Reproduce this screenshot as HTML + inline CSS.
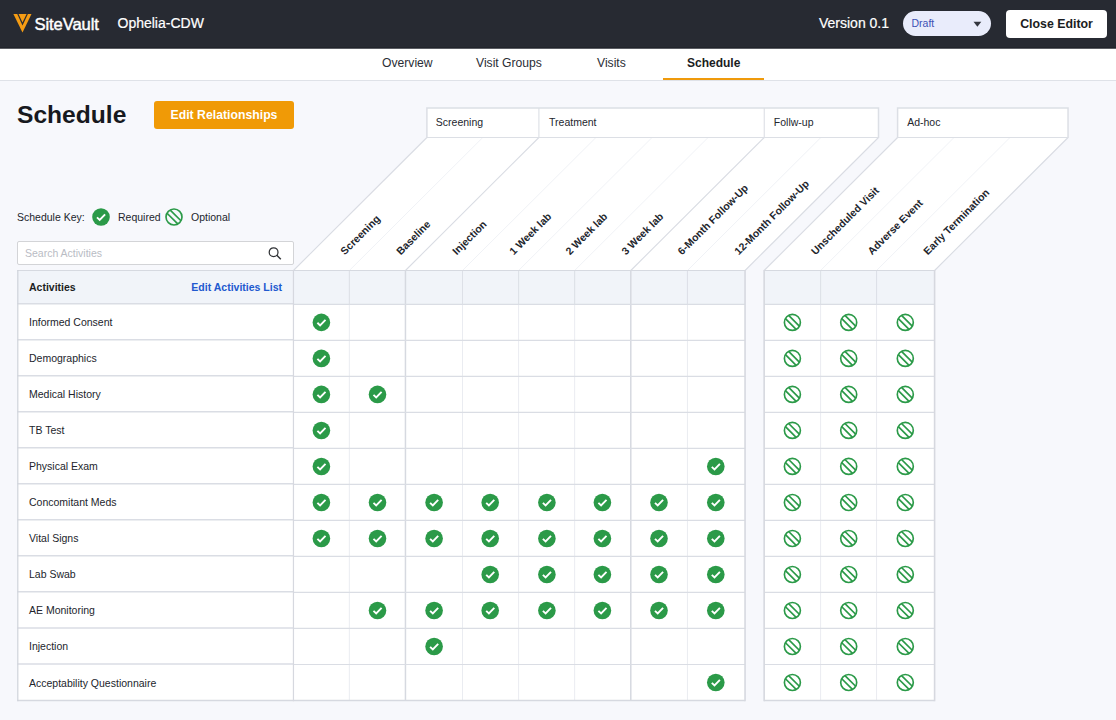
<!DOCTYPE html>
<html lang="en"><head><meta charset="utf-8"><title>Schedule</title>
<style>
*{box-sizing:border-box;margin:0;padding:0}
html,body{width:1116px;height:720px;overflow:hidden}
body{background:#f7f8fc;font-family:"Liberation Sans",Arial,sans-serif;color:#22252c;position:relative}
.abs{position:absolute;white-space:nowrap}
#top{position:absolute;left:0;top:0;width:1116px;height:48px;background:#272a32;border-bottom:1px solid #21242b}
#topsh{position:absolute;left:0;top:48px;width:1116px;height:1px;background:#5b5d63;z-index:2}
#nav{position:absolute;left:0;top:48px;width:1116px;height:33px;background:#fff;border-bottom:1px solid #dfe2e8}
.tab{position:absolute;top:0;height:32px;line-height:30px;font-size:12.15px;color:#2a2d35;white-space:nowrap}
.tab.on{font-weight:bold;color:#1b1d22;font-size:12px}
#ul{position:absolute;left:663px;top:30px;width:101px;height:2px;background:#ef9a0c}
#pill{position:absolute;left:903px;top:11px;width:88px;height:25px;border-radius:13px;background:#e9ecfb;color:#3c51b5;font-size:10.5px;line-height:25px;padding-left:8.5px}
#pill svg{position:absolute;left:0;top:0}
#close{position:absolute;left:1006px;top:10px;width:101px;height:28px;border-radius:4px;background:#fff;color:#1b1d22;font-weight:bold;font-size:12.35px;line-height:28px;text-align:center}
#h1{left:17px;top:98px;font-size:24.6px;font-weight:bold;color:#17191e;line-height:34px}
#editrel{position:absolute;left:154px;top:101px;width:140px;height:28px;border-radius:3px;background:#f09a06;color:#fff;font-weight:bold;font-size:12.25px;line-height:27px;text-align:center}
.sm{font-size:10.5px;line-height:14px}
#search{position:absolute;left:17px;top:241px;width:277px;height:24px;background:#fff;border:1px solid #d3d4d7;border-radius:2px;font-size:10.5px;color:#b9bcc4;line-height:22px;padding-left:7px}
svg text{font-family:"Liberation Sans",Arial,sans-serif}
</style></head><body>
<div id="top">
<svg class="abs" style="left:13px;top:13px" width="20" height="21" viewBox="0 0 20 21"><path d="M0.4,1 L18.5,1 L9.5,19.6 Z" fill="#f59c14"/><path d="M4.25,0.9 L14.9,0.9 L9.5,12.4 Z" fill="#272a32"/><path d="M5.5,1 L13.6,1 L9.5,9.4 Z" fill="#f59c14"/></svg>
<div class="abs" style="left:34.6px;top:13px;transform:translateY(1.7px);font-size:16.6px;line-height:20px;color:#fff;letter-spacing:-0.12px;-webkit-text-stroke:0.45px #fff">SiteVault</div>
<div class="abs" style="left:117.5px;top:14px;font-size:14px;line-height:18px;color:#fff;-webkit-text-stroke:0.2px #fff">Ophelia-CDW</div>
<div class="abs" style="left:819px;top:14px;font-size:14px;line-height:18px;color:#fff;-webkit-text-stroke:0.2px #fff">Version 0.1</div>
<div id="pill">Draft<svg width="88" height="25" viewBox="0 0 88 25"><polygon points="70.5,10.8 78.3,10.8 74.4,15.7" fill="#34373f"/></svg></div>
<div id="close">Close Editor</div>
</div>
<div id="topsh"></div>
<div id="nav">
<div class="tab" style="left:382px">Overview</div>
<div class="tab" style="left:476px">Visit Groups</div>
<div class="tab" style="left:597px">Visits</div>
<div class="tab on" style="left:687px">Schedule</div>
<div id="ul"></div>
</div>
<div class="abs" id="h1">Schedule</div>
<div id="editrel"><span style="display:inline-block;transform:translateY(0.7px)">Edit Relationships</span></div>
<div class="abs sm" style="left:17px;top:210px">Schedule Key:</div>
<div class="abs sm" style="left:118px;top:210px">Required</div>
<div class="abs sm" style="left:191px;top:210px">Optional</div>
<div id="search">Search Activities
<svg class="abs" style="right:11px;top:4px" width="14" height="15" viewBox="0 0 14 15"><circle cx="5.6" cy="6.15" r="4.4" fill="none" stroke="#303236" stroke-width="1.25"/><path d="M8.8,9.35 L12.8,13.35" stroke="#303236" stroke-width="1.45"/></svg>
</div>
<svg class="abs" style="left:0;top:0" width="1116" height="720" viewBox="0 0 1116 720">
<g transform="translate(101.00,217.00)"><circle r="8.8" fill="#2b9a48"/><path d="M-4.0,0.4 L-1.3,3.0 L4.1,-2.6" fill="none" stroke="#fff" stroke-width="1.9"/></g>
<g transform="translate(174.00,217.00)"><circle r="8.0" fill="none" stroke="#2b9a48" stroke-width="1.65"/><path d="M-6.95,-3.75 L3.75,6.95 M-3.75,-6.95 L6.95,3.75" stroke="#2b9a48" stroke-width="1.7" fill="none"/></g>
<polygon points="293.45,270.5 426.9,137.5 878.5,137.5 745.05,270.5" fill="#fff"/>
<polygon points="764.15,270.5 897.5999999999999,137.5 1068.05,137.5 934.6,270.5" fill="#fff"/>
<line x1="293.45" y1="270.5" x2="426.90" y2="137.5" stroke="#d9dce3" stroke-width="1.1"/>
<line x1="349.35" y1="270.5" x2="482.80" y2="137.5" stroke="#f0f2f6" stroke-width="1"/>
<line x1="405.45" y1="270.5" x2="538.90" y2="137.5" stroke="#d9dce3" stroke-width="1.1"/>
<line x1="462.50" y1="270.5" x2="595.95" y2="137.5" stroke="#f0f2f6" stroke-width="1"/>
<line x1="518.60" y1="270.5" x2="652.05" y2="137.5" stroke="#f0f2f6" stroke-width="1"/>
<line x1="574.65" y1="270.5" x2="708.10" y2="137.5" stroke="#f0f2f6" stroke-width="1"/>
<line x1="630.80" y1="270.5" x2="764.25" y2="137.5" stroke="#d9dce3" stroke-width="1.1"/>
<line x1="687.45" y1="270.5" x2="820.90" y2="137.5" stroke="#f0f2f6" stroke-width="1"/>
<line x1="745.05" y1="270.5" x2="878.50" y2="137.5" stroke="#d9dce3" stroke-width="1.1"/>
<line x1="764.15" y1="270.5" x2="897.60" y2="137.5" stroke="#d9dce3" stroke-width="1.1"/>
<line x1="820.60" y1="270.5" x2="954.05" y2="137.5" stroke="#f0f2f6" stroke-width="1"/>
<line x1="876.55" y1="270.5" x2="1010.00" y2="137.5" stroke="#f0f2f6" stroke-width="1"/>
<line x1="934.60" y1="270.5" x2="1068.05" y2="137.5" stroke="#d9dce3" stroke-width="1.1"/>
<rect x="426.90" y="108.0" width="451.60" height="29.5" fill="#fff"/>
<path d="M426.90,138.0 L426.90,108.0 L878.50,108.0 L878.50,138.0" fill="none" stroke="#dcdfe5" stroke-width="1.5" stroke-linejoin="miter"/>
<line x1="426.90" y1="137.5" x2="878.50" y2="137.5" stroke="#dcdfe5" stroke-width="1.1"/>
<line x1="538.90" y1="108.0" x2="538.90" y2="137.5" stroke="#dcdfe5" stroke-width="1.1"/>
<line x1="764.25" y1="108.0" x2="764.25" y2="137.5" stroke="#dcdfe5" stroke-width="1.1"/>
<text x="435.80" y="126.0" font-size="10.5" fill="#23262e">Screening</text>
<text x="549.05" y="126.0" font-size="10.5" fill="#23262e">Treatment</text>
<text x="773.85" y="126.0" font-size="10.5" fill="#23262e">Follw-up</text>
<rect x="897.60" y="108.0" width="170.45" height="29.5" fill="#fff"/>
<path d="M897.60,138.0 L897.60,108.0 L1068.05,108.0 L1068.05,138.0" fill="none" stroke="#dcdfe5" stroke-width="1.5" stroke-linejoin="miter"/>
<line x1="897.60" y1="137.5" x2="1068.05" y2="137.5" stroke="#dcdfe5" stroke-width="1.1"/>
<text x="907.20" y="126.0" font-size="10.5" fill="#23262e">Ad-hoc</text>
<text transform="translate(344.8,255.4) rotate(-45)" font-size="10.5" font-weight="bold" fill="#22252c">Screening</text>
<text transform="translate(400.7,255.4) rotate(-45)" font-size="10.5" font-weight="bold" fill="#22252c">Baseline</text>
<text transform="translate(456.8,255.4) rotate(-45)" font-size="10.5" font-weight="bold" fill="#22252c">Injection</text>
<text transform="translate(513.8,255.4) rotate(-45)" font-size="10.5" font-weight="bold" fill="#22252c">1 Week lab</text>
<text transform="translate(569.9,255.4) rotate(-45)" font-size="10.5" font-weight="bold" fill="#22252c">2 Week lab</text>
<text transform="translate(625.9,255.4) rotate(-45)" font-size="10.5" font-weight="bold" fill="#22252c">3 Week lab</text>
<text transform="translate(682.1,255.4) rotate(-45)" font-size="10.5" font-weight="bold" fill="#22252c">6-Month Follow-Up</text>
<text transform="translate(738.8,255.4) rotate(-45)" font-size="10.5" font-weight="bold" fill="#22252c">12-Month Follow-Up</text>
<text transform="translate(815.4,255.4) rotate(-45)" font-size="10.5" font-weight="bold" fill="#22252c">Unscheduled Visit</text>
<text transform="translate(871.9,255.4) rotate(-45)" font-size="10.5" font-weight="bold" fill="#22252c">Adverse Event</text>
<text transform="translate(927.8,255.4) rotate(-45)" font-size="10.5" font-weight="bold" fill="#22252c">Early Termination</text>
<rect x="17.5" y="270.0" width="275.95" height="430.60" fill="#fff"/>
<rect x="17.5" y="270.0" width="275.95" height="33.70" fill="#f1f4f9"/>
<line x1="17.5" y1="303.70" x2="293.45" y2="303.70" stroke="#dadde4" stroke-width="1.5"/>
<line x1="17.5" y1="339.72" x2="293.45" y2="339.72" stroke="#dadde4" stroke-width="1.5"/>
<line x1="17.5" y1="375.74" x2="293.45" y2="375.74" stroke="#dadde4" stroke-width="1.5"/>
<line x1="17.5" y1="411.76" x2="293.45" y2="411.76" stroke="#dadde4" stroke-width="1.5"/>
<line x1="17.5" y1="447.78" x2="293.45" y2="447.78" stroke="#dadde4" stroke-width="1.5"/>
<line x1="17.5" y1="483.80" x2="293.45" y2="483.80" stroke="#dadde4" stroke-width="1.5"/>
<line x1="17.5" y1="519.82" x2="293.45" y2="519.82" stroke="#dadde4" stroke-width="1.5"/>
<line x1="17.5" y1="555.84" x2="293.45" y2="555.84" stroke="#dadde4" stroke-width="1.5"/>
<line x1="17.5" y1="591.86" x2="293.45" y2="591.86" stroke="#dadde4" stroke-width="1.5"/>
<line x1="17.5" y1="627.88" x2="293.45" y2="627.88" stroke="#dadde4" stroke-width="1.5"/>
<line x1="17.5" y1="663.90" x2="293.45" y2="663.90" stroke="#dadde4" stroke-width="1.5"/>
<line x1="17.5" y1="700.6" x2="293.45" y2="700.6" stroke="#d6d9e0" stroke-width="1.5"/>
<line x1="17.5" y1="270.5" x2="293.45" y2="270.5" stroke="#d6d9e0" stroke-width="1.2"/>
<line x1="17.8" y1="270.0" x2="17.8" y2="701.35" stroke="#cfd2da" stroke-width="1.2"/>
<text x="29" y="291.0" font-size="10.5" font-weight="bold" fill="#1b1d22">Activities</text>
<text x="282" y="291.0" font-size="10.5" font-weight="bold" fill="#2159cf" text-anchor="end">Edit Activities List</text>
<text x="29" y="325.80" font-size="10.5" fill="#22252c">Informed Consent</text>
<text x="29" y="361.82" font-size="10.5" fill="#22252c">Demographics</text>
<text x="29" y="397.84" font-size="10.5" fill="#22252c">Medical History</text>
<text x="29" y="433.86" font-size="10.5" fill="#22252c">TB Test</text>
<text x="29" y="469.88" font-size="10.5" fill="#22252c">Physical Exam</text>
<text x="29" y="505.90" font-size="10.5" fill="#22252c">Concomitant Meds</text>
<text x="29" y="541.92" font-size="10.5" fill="#22252c">Vital Signs</text>
<text x="29" y="577.94" font-size="10.5" fill="#22252c">Lab Swab</text>
<text x="29" y="613.96" font-size="10.5" fill="#22252c">AE Monitoring</text>
<text x="29" y="649.98" font-size="10.5" fill="#22252c">Injection</text>
<text x="29" y="686.70" font-size="10.5" fill="#22252c">Acceptability Questionnaire</text>
<rect x="293.45" y="270.0" width="451.60" height="430.60" fill="#fff"/>
<rect x="293.45" y="270.0" width="451.60" height="34.35" fill="#f1f4f9"/>
<line x1="349.35" y1="270.0" x2="349.35" y2="700.60" stroke="#eaecf1" stroke-width="1"/>
<line x1="349.35" y1="270.0" x2="349.35" y2="304.35" stroke="#dde0e7" stroke-width="1"/>
<line x1="405.45" y1="270.0" x2="405.45" y2="700.60" stroke="#d6d9e0" stroke-width="1.5"/>
<line x1="462.50" y1="270.0" x2="462.50" y2="700.60" stroke="#eaecf1" stroke-width="1"/>
<line x1="462.50" y1="270.0" x2="462.50" y2="304.35" stroke="#dde0e7" stroke-width="1"/>
<line x1="518.60" y1="270.0" x2="518.60" y2="700.60" stroke="#eaecf1" stroke-width="1"/>
<line x1="518.60" y1="270.0" x2="518.60" y2="304.35" stroke="#dde0e7" stroke-width="1"/>
<line x1="574.65" y1="270.0" x2="574.65" y2="700.60" stroke="#eaecf1" stroke-width="1"/>
<line x1="574.65" y1="270.0" x2="574.65" y2="304.35" stroke="#dde0e7" stroke-width="1"/>
<line x1="630.80" y1="270.0" x2="630.80" y2="700.60" stroke="#d6d9e0" stroke-width="1.5"/>
<line x1="687.45" y1="270.0" x2="687.45" y2="700.60" stroke="#eaecf1" stroke-width="1"/>
<line x1="687.45" y1="270.0" x2="687.45" y2="304.35" stroke="#dde0e7" stroke-width="1"/>
<line x1="293.45" y1="304.35" x2="745.05" y2="304.35" stroke="#dadde4" stroke-width="1.15"/>
<line x1="293.45" y1="340.36" x2="745.05" y2="340.36" stroke="#dadde4" stroke-width="1.15"/>
<line x1="293.45" y1="376.37" x2="745.05" y2="376.37" stroke="#dadde4" stroke-width="1.15"/>
<line x1="293.45" y1="412.38" x2="745.05" y2="412.38" stroke="#dadde4" stroke-width="1.15"/>
<line x1="293.45" y1="448.39" x2="745.05" y2="448.39" stroke="#dadde4" stroke-width="1.15"/>
<line x1="293.45" y1="484.40" x2="745.05" y2="484.40" stroke="#dadde4" stroke-width="1.15"/>
<line x1="293.45" y1="520.41" x2="745.05" y2="520.41" stroke="#dadde4" stroke-width="1.15"/>
<line x1="293.45" y1="556.42" x2="745.05" y2="556.42" stroke="#dadde4" stroke-width="1.15"/>
<line x1="293.45" y1="592.43" x2="745.05" y2="592.43" stroke="#dadde4" stroke-width="1.15"/>
<line x1="293.45" y1="628.44" x2="745.05" y2="628.44" stroke="#dadde4" stroke-width="1.15"/>
<line x1="293.45" y1="664.45" x2="745.05" y2="664.45" stroke="#dadde4" stroke-width="1.15"/>
<line x1="293.45" y1="700.6" x2="745.05" y2="700.6" stroke="#d6d9e0" stroke-width="1.5"/>
<line x1="293.45" y1="270.5" x2="745.05" y2="270.5" stroke="#d6d9e0" stroke-width="1.2"/>
<line x1="293.45" y1="270.0" x2="293.45" y2="701.35" stroke="#d6d8df" stroke-width="1.2"/>
<line x1="745.05" y1="270.0" x2="745.05" y2="701.35" stroke="#d6d8df" stroke-width="1.6"/>
<rect x="764.15" y="270.0" width="170.45" height="430.60" fill="#fff"/>
<rect x="764.15" y="270.0" width="170.45" height="34.35" fill="#f1f4f9"/>
<line x1="820.60" y1="270.0" x2="820.60" y2="700.60" stroke="#eaecf1" stroke-width="1"/>
<line x1="820.60" y1="270.0" x2="820.60" y2="304.35" stroke="#dde0e7" stroke-width="1"/>
<line x1="876.55" y1="270.0" x2="876.55" y2="700.60" stroke="#eaecf1" stroke-width="1"/>
<line x1="876.55" y1="270.0" x2="876.55" y2="304.35" stroke="#dde0e7" stroke-width="1"/>
<line x1="764.15" y1="304.35" x2="934.60" y2="304.35" stroke="#dadde4" stroke-width="1.15"/>
<line x1="764.15" y1="340.36" x2="934.60" y2="340.36" stroke="#dadde4" stroke-width="1.15"/>
<line x1="764.15" y1="376.37" x2="934.60" y2="376.37" stroke="#dadde4" stroke-width="1.15"/>
<line x1="764.15" y1="412.38" x2="934.60" y2="412.38" stroke="#dadde4" stroke-width="1.15"/>
<line x1="764.15" y1="448.39" x2="934.60" y2="448.39" stroke="#dadde4" stroke-width="1.15"/>
<line x1="764.15" y1="484.40" x2="934.60" y2="484.40" stroke="#dadde4" stroke-width="1.15"/>
<line x1="764.15" y1="520.41" x2="934.60" y2="520.41" stroke="#dadde4" stroke-width="1.15"/>
<line x1="764.15" y1="556.42" x2="934.60" y2="556.42" stroke="#dadde4" stroke-width="1.15"/>
<line x1="764.15" y1="592.43" x2="934.60" y2="592.43" stroke="#dadde4" stroke-width="1.15"/>
<line x1="764.15" y1="628.44" x2="934.60" y2="628.44" stroke="#dadde4" stroke-width="1.15"/>
<line x1="764.15" y1="664.45" x2="934.60" y2="664.45" stroke="#dadde4" stroke-width="1.15"/>
<line x1="764.15" y1="700.6" x2="934.60" y2="700.6" stroke="#d6d9e0" stroke-width="1.5"/>
<line x1="764.15" y1="270.5" x2="934.60" y2="270.5" stroke="#d6d9e0" stroke-width="1.2"/>
<line x1="764.15" y1="270.0" x2="764.15" y2="701.35" stroke="#d6d8df" stroke-width="1.6"/>
<line x1="934.60" y1="270.0" x2="934.60" y2="701.35" stroke="#d6d8df" stroke-width="1.6"/>
<g transform="translate(321.40,322.40)"><circle r="8.8" fill="#2b9a48"/><path d="M-4.0,0.4 L-1.3,3.0 L4.1,-2.6" fill="none" stroke="#fff" stroke-width="1.9"/></g>
<g transform="translate(792.40,322.40)"><circle r="8.0" fill="none" stroke="#2b9a48" stroke-width="1.65"/><path d="M-6.95,-3.75 L3.75,6.95 M-3.75,-6.95 L6.95,3.75" stroke="#2b9a48" stroke-width="1.7" fill="none"/></g>
<g transform="translate(848.70,322.40)"><circle r="8.0" fill="none" stroke="#2b9a48" stroke-width="1.65"/><path d="M-6.95,-3.75 L3.75,6.95 M-3.75,-6.95 L6.95,3.75" stroke="#2b9a48" stroke-width="1.7" fill="none"/></g>
<g transform="translate(905.30,322.40)"><circle r="8.0" fill="none" stroke="#2b9a48" stroke-width="1.65"/><path d="M-6.95,-3.75 L3.75,6.95 M-3.75,-6.95 L6.95,3.75" stroke="#2b9a48" stroke-width="1.7" fill="none"/></g>
<g transform="translate(321.40,358.41)"><circle r="8.8" fill="#2b9a48"/><path d="M-4.0,0.4 L-1.3,3.0 L4.1,-2.6" fill="none" stroke="#fff" stroke-width="1.9"/></g>
<g transform="translate(792.40,358.41)"><circle r="8.0" fill="none" stroke="#2b9a48" stroke-width="1.65"/><path d="M-6.95,-3.75 L3.75,6.95 M-3.75,-6.95 L6.95,3.75" stroke="#2b9a48" stroke-width="1.7" fill="none"/></g>
<g transform="translate(848.70,358.41)"><circle r="8.0" fill="none" stroke="#2b9a48" stroke-width="1.65"/><path d="M-6.95,-3.75 L3.75,6.95 M-3.75,-6.95 L6.95,3.75" stroke="#2b9a48" stroke-width="1.7" fill="none"/></g>
<g transform="translate(905.30,358.41)"><circle r="8.0" fill="none" stroke="#2b9a48" stroke-width="1.65"/><path d="M-6.95,-3.75 L3.75,6.95 M-3.75,-6.95 L6.95,3.75" stroke="#2b9a48" stroke-width="1.7" fill="none"/></g>
<g transform="translate(321.40,394.42)"><circle r="8.8" fill="#2b9a48"/><path d="M-4.0,0.4 L-1.3,3.0 L4.1,-2.6" fill="none" stroke="#fff" stroke-width="1.9"/></g>
<g transform="translate(377.50,394.42)"><circle r="8.8" fill="#2b9a48"/><path d="M-4.0,0.4 L-1.3,3.0 L4.1,-2.6" fill="none" stroke="#fff" stroke-width="1.9"/></g>
<g transform="translate(792.40,394.42)"><circle r="8.0" fill="none" stroke="#2b9a48" stroke-width="1.65"/><path d="M-6.95,-3.75 L3.75,6.95 M-3.75,-6.95 L6.95,3.75" stroke="#2b9a48" stroke-width="1.7" fill="none"/></g>
<g transform="translate(848.70,394.42)"><circle r="8.0" fill="none" stroke="#2b9a48" stroke-width="1.65"/><path d="M-6.95,-3.75 L3.75,6.95 M-3.75,-6.95 L6.95,3.75" stroke="#2b9a48" stroke-width="1.7" fill="none"/></g>
<g transform="translate(905.30,394.42)"><circle r="8.0" fill="none" stroke="#2b9a48" stroke-width="1.65"/><path d="M-6.95,-3.75 L3.75,6.95 M-3.75,-6.95 L6.95,3.75" stroke="#2b9a48" stroke-width="1.7" fill="none"/></g>
<g transform="translate(321.40,430.43)"><circle r="8.8" fill="#2b9a48"/><path d="M-4.0,0.4 L-1.3,3.0 L4.1,-2.6" fill="none" stroke="#fff" stroke-width="1.9"/></g>
<g transform="translate(792.40,430.43)"><circle r="8.0" fill="none" stroke="#2b9a48" stroke-width="1.65"/><path d="M-6.95,-3.75 L3.75,6.95 M-3.75,-6.95 L6.95,3.75" stroke="#2b9a48" stroke-width="1.7" fill="none"/></g>
<g transform="translate(848.70,430.43)"><circle r="8.0" fill="none" stroke="#2b9a48" stroke-width="1.65"/><path d="M-6.95,-3.75 L3.75,6.95 M-3.75,-6.95 L6.95,3.75" stroke="#2b9a48" stroke-width="1.7" fill="none"/></g>
<g transform="translate(905.30,430.43)"><circle r="8.0" fill="none" stroke="#2b9a48" stroke-width="1.65"/><path d="M-6.95,-3.75 L3.75,6.95 M-3.75,-6.95 L6.95,3.75" stroke="#2b9a48" stroke-width="1.7" fill="none"/></g>
<g transform="translate(321.40,466.44)"><circle r="8.8" fill="#2b9a48"/><path d="M-4.0,0.4 L-1.3,3.0 L4.1,-2.6" fill="none" stroke="#fff" stroke-width="1.9"/></g>
<g transform="translate(715.80,466.44)"><circle r="8.8" fill="#2b9a48"/><path d="M-4.0,0.4 L-1.3,3.0 L4.1,-2.6" fill="none" stroke="#fff" stroke-width="1.9"/></g>
<g transform="translate(792.40,466.44)"><circle r="8.0" fill="none" stroke="#2b9a48" stroke-width="1.65"/><path d="M-6.95,-3.75 L3.75,6.95 M-3.75,-6.95 L6.95,3.75" stroke="#2b9a48" stroke-width="1.7" fill="none"/></g>
<g transform="translate(848.70,466.44)"><circle r="8.0" fill="none" stroke="#2b9a48" stroke-width="1.65"/><path d="M-6.95,-3.75 L3.75,6.95 M-3.75,-6.95 L6.95,3.75" stroke="#2b9a48" stroke-width="1.7" fill="none"/></g>
<g transform="translate(905.30,466.44)"><circle r="8.0" fill="none" stroke="#2b9a48" stroke-width="1.65"/><path d="M-6.95,-3.75 L3.75,6.95 M-3.75,-6.95 L6.95,3.75" stroke="#2b9a48" stroke-width="1.7" fill="none"/></g>
<g transform="translate(321.40,502.45)"><circle r="8.8" fill="#2b9a48"/><path d="M-4.0,0.4 L-1.3,3.0 L4.1,-2.6" fill="none" stroke="#fff" stroke-width="1.9"/></g>
<g transform="translate(377.50,502.45)"><circle r="8.8" fill="#2b9a48"/><path d="M-4.0,0.4 L-1.3,3.0 L4.1,-2.6" fill="none" stroke="#fff" stroke-width="1.9"/></g>
<g transform="translate(434.10,502.45)"><circle r="8.8" fill="#2b9a48"/><path d="M-4.0,0.4 L-1.3,3.0 L4.1,-2.6" fill="none" stroke="#fff" stroke-width="1.9"/></g>
<g transform="translate(490.20,502.45)"><circle r="8.8" fill="#2b9a48"/><path d="M-4.0,0.4 L-1.3,3.0 L4.1,-2.6" fill="none" stroke="#fff" stroke-width="1.9"/></g>
<g transform="translate(546.90,502.45)"><circle r="8.8" fill="#2b9a48"/><path d="M-4.0,0.4 L-1.3,3.0 L4.1,-2.6" fill="none" stroke="#fff" stroke-width="1.9"/></g>
<g transform="translate(602.40,502.45)"><circle r="8.8" fill="#2b9a48"/><path d="M-4.0,0.4 L-1.3,3.0 L4.1,-2.6" fill="none" stroke="#fff" stroke-width="1.9"/></g>
<g transform="translate(659.00,502.45)"><circle r="8.8" fill="#2b9a48"/><path d="M-4.0,0.4 L-1.3,3.0 L4.1,-2.6" fill="none" stroke="#fff" stroke-width="1.9"/></g>
<g transform="translate(715.80,502.45)"><circle r="8.8" fill="#2b9a48"/><path d="M-4.0,0.4 L-1.3,3.0 L4.1,-2.6" fill="none" stroke="#fff" stroke-width="1.9"/></g>
<g transform="translate(792.40,502.45)"><circle r="8.0" fill="none" stroke="#2b9a48" stroke-width="1.65"/><path d="M-6.95,-3.75 L3.75,6.95 M-3.75,-6.95 L6.95,3.75" stroke="#2b9a48" stroke-width="1.7" fill="none"/></g>
<g transform="translate(848.70,502.45)"><circle r="8.0" fill="none" stroke="#2b9a48" stroke-width="1.65"/><path d="M-6.95,-3.75 L3.75,6.95 M-3.75,-6.95 L6.95,3.75" stroke="#2b9a48" stroke-width="1.7" fill="none"/></g>
<g transform="translate(905.30,502.45)"><circle r="8.0" fill="none" stroke="#2b9a48" stroke-width="1.65"/><path d="M-6.95,-3.75 L3.75,6.95 M-3.75,-6.95 L6.95,3.75" stroke="#2b9a48" stroke-width="1.7" fill="none"/></g>
<g transform="translate(321.40,538.46)"><circle r="8.8" fill="#2b9a48"/><path d="M-4.0,0.4 L-1.3,3.0 L4.1,-2.6" fill="none" stroke="#fff" stroke-width="1.9"/></g>
<g transform="translate(377.50,538.46)"><circle r="8.8" fill="#2b9a48"/><path d="M-4.0,0.4 L-1.3,3.0 L4.1,-2.6" fill="none" stroke="#fff" stroke-width="1.9"/></g>
<g transform="translate(434.10,538.46)"><circle r="8.8" fill="#2b9a48"/><path d="M-4.0,0.4 L-1.3,3.0 L4.1,-2.6" fill="none" stroke="#fff" stroke-width="1.9"/></g>
<g transform="translate(490.20,538.46)"><circle r="8.8" fill="#2b9a48"/><path d="M-4.0,0.4 L-1.3,3.0 L4.1,-2.6" fill="none" stroke="#fff" stroke-width="1.9"/></g>
<g transform="translate(546.90,538.46)"><circle r="8.8" fill="#2b9a48"/><path d="M-4.0,0.4 L-1.3,3.0 L4.1,-2.6" fill="none" stroke="#fff" stroke-width="1.9"/></g>
<g transform="translate(602.40,538.46)"><circle r="8.8" fill="#2b9a48"/><path d="M-4.0,0.4 L-1.3,3.0 L4.1,-2.6" fill="none" stroke="#fff" stroke-width="1.9"/></g>
<g transform="translate(659.00,538.46)"><circle r="8.8" fill="#2b9a48"/><path d="M-4.0,0.4 L-1.3,3.0 L4.1,-2.6" fill="none" stroke="#fff" stroke-width="1.9"/></g>
<g transform="translate(715.80,538.46)"><circle r="8.8" fill="#2b9a48"/><path d="M-4.0,0.4 L-1.3,3.0 L4.1,-2.6" fill="none" stroke="#fff" stroke-width="1.9"/></g>
<g transform="translate(792.40,538.46)"><circle r="8.0" fill="none" stroke="#2b9a48" stroke-width="1.65"/><path d="M-6.95,-3.75 L3.75,6.95 M-3.75,-6.95 L6.95,3.75" stroke="#2b9a48" stroke-width="1.7" fill="none"/></g>
<g transform="translate(848.70,538.46)"><circle r="8.0" fill="none" stroke="#2b9a48" stroke-width="1.65"/><path d="M-6.95,-3.75 L3.75,6.95 M-3.75,-6.95 L6.95,3.75" stroke="#2b9a48" stroke-width="1.7" fill="none"/></g>
<g transform="translate(905.30,538.46)"><circle r="8.0" fill="none" stroke="#2b9a48" stroke-width="1.65"/><path d="M-6.95,-3.75 L3.75,6.95 M-3.75,-6.95 L6.95,3.75" stroke="#2b9a48" stroke-width="1.7" fill="none"/></g>
<g transform="translate(490.20,574.47)"><circle r="8.8" fill="#2b9a48"/><path d="M-4.0,0.4 L-1.3,3.0 L4.1,-2.6" fill="none" stroke="#fff" stroke-width="1.9"/></g>
<g transform="translate(546.90,574.47)"><circle r="8.8" fill="#2b9a48"/><path d="M-4.0,0.4 L-1.3,3.0 L4.1,-2.6" fill="none" stroke="#fff" stroke-width="1.9"/></g>
<g transform="translate(602.40,574.47)"><circle r="8.8" fill="#2b9a48"/><path d="M-4.0,0.4 L-1.3,3.0 L4.1,-2.6" fill="none" stroke="#fff" stroke-width="1.9"/></g>
<g transform="translate(659.00,574.47)"><circle r="8.8" fill="#2b9a48"/><path d="M-4.0,0.4 L-1.3,3.0 L4.1,-2.6" fill="none" stroke="#fff" stroke-width="1.9"/></g>
<g transform="translate(715.80,574.47)"><circle r="8.8" fill="#2b9a48"/><path d="M-4.0,0.4 L-1.3,3.0 L4.1,-2.6" fill="none" stroke="#fff" stroke-width="1.9"/></g>
<g transform="translate(792.40,574.47)"><circle r="8.0" fill="none" stroke="#2b9a48" stroke-width="1.65"/><path d="M-6.95,-3.75 L3.75,6.95 M-3.75,-6.95 L6.95,3.75" stroke="#2b9a48" stroke-width="1.7" fill="none"/></g>
<g transform="translate(848.70,574.47)"><circle r="8.0" fill="none" stroke="#2b9a48" stroke-width="1.65"/><path d="M-6.95,-3.75 L3.75,6.95 M-3.75,-6.95 L6.95,3.75" stroke="#2b9a48" stroke-width="1.7" fill="none"/></g>
<g transform="translate(905.30,574.47)"><circle r="8.0" fill="none" stroke="#2b9a48" stroke-width="1.65"/><path d="M-6.95,-3.75 L3.75,6.95 M-3.75,-6.95 L6.95,3.75" stroke="#2b9a48" stroke-width="1.7" fill="none"/></g>
<g transform="translate(377.50,610.48)"><circle r="8.8" fill="#2b9a48"/><path d="M-4.0,0.4 L-1.3,3.0 L4.1,-2.6" fill="none" stroke="#fff" stroke-width="1.9"/></g>
<g transform="translate(434.10,610.48)"><circle r="8.8" fill="#2b9a48"/><path d="M-4.0,0.4 L-1.3,3.0 L4.1,-2.6" fill="none" stroke="#fff" stroke-width="1.9"/></g>
<g transform="translate(490.20,610.48)"><circle r="8.8" fill="#2b9a48"/><path d="M-4.0,0.4 L-1.3,3.0 L4.1,-2.6" fill="none" stroke="#fff" stroke-width="1.9"/></g>
<g transform="translate(546.90,610.48)"><circle r="8.8" fill="#2b9a48"/><path d="M-4.0,0.4 L-1.3,3.0 L4.1,-2.6" fill="none" stroke="#fff" stroke-width="1.9"/></g>
<g transform="translate(602.40,610.48)"><circle r="8.8" fill="#2b9a48"/><path d="M-4.0,0.4 L-1.3,3.0 L4.1,-2.6" fill="none" stroke="#fff" stroke-width="1.9"/></g>
<g transform="translate(659.00,610.48)"><circle r="8.8" fill="#2b9a48"/><path d="M-4.0,0.4 L-1.3,3.0 L4.1,-2.6" fill="none" stroke="#fff" stroke-width="1.9"/></g>
<g transform="translate(715.80,610.48)"><circle r="8.8" fill="#2b9a48"/><path d="M-4.0,0.4 L-1.3,3.0 L4.1,-2.6" fill="none" stroke="#fff" stroke-width="1.9"/></g>
<g transform="translate(792.40,610.48)"><circle r="8.0" fill="none" stroke="#2b9a48" stroke-width="1.65"/><path d="M-6.95,-3.75 L3.75,6.95 M-3.75,-6.95 L6.95,3.75" stroke="#2b9a48" stroke-width="1.7" fill="none"/></g>
<g transform="translate(848.70,610.48)"><circle r="8.0" fill="none" stroke="#2b9a48" stroke-width="1.65"/><path d="M-6.95,-3.75 L3.75,6.95 M-3.75,-6.95 L6.95,3.75" stroke="#2b9a48" stroke-width="1.7" fill="none"/></g>
<g transform="translate(905.30,610.48)"><circle r="8.0" fill="none" stroke="#2b9a48" stroke-width="1.65"/><path d="M-6.95,-3.75 L3.75,6.95 M-3.75,-6.95 L6.95,3.75" stroke="#2b9a48" stroke-width="1.7" fill="none"/></g>
<g transform="translate(434.10,646.49)"><circle r="8.8" fill="#2b9a48"/><path d="M-4.0,0.4 L-1.3,3.0 L4.1,-2.6" fill="none" stroke="#fff" stroke-width="1.9"/></g>
<g transform="translate(792.40,646.49)"><circle r="8.0" fill="none" stroke="#2b9a48" stroke-width="1.65"/><path d="M-6.95,-3.75 L3.75,6.95 M-3.75,-6.95 L6.95,3.75" stroke="#2b9a48" stroke-width="1.7" fill="none"/></g>
<g transform="translate(848.70,646.49)"><circle r="8.0" fill="none" stroke="#2b9a48" stroke-width="1.65"/><path d="M-6.95,-3.75 L3.75,6.95 M-3.75,-6.95 L6.95,3.75" stroke="#2b9a48" stroke-width="1.7" fill="none"/></g>
<g transform="translate(905.30,646.49)"><circle r="8.0" fill="none" stroke="#2b9a48" stroke-width="1.65"/><path d="M-6.95,-3.75 L3.75,6.95 M-3.75,-6.95 L6.95,3.75" stroke="#2b9a48" stroke-width="1.7" fill="none"/></g>
<g transform="translate(715.80,682.50)"><circle r="8.8" fill="#2b9a48"/><path d="M-4.0,0.4 L-1.3,3.0 L4.1,-2.6" fill="none" stroke="#fff" stroke-width="1.9"/></g>
<g transform="translate(792.40,682.50)"><circle r="8.0" fill="none" stroke="#2b9a48" stroke-width="1.65"/><path d="M-6.95,-3.75 L3.75,6.95 M-3.75,-6.95 L6.95,3.75" stroke="#2b9a48" stroke-width="1.7" fill="none"/></g>
<g transform="translate(848.70,682.50)"><circle r="8.0" fill="none" stroke="#2b9a48" stroke-width="1.65"/><path d="M-6.95,-3.75 L3.75,6.95 M-3.75,-6.95 L6.95,3.75" stroke="#2b9a48" stroke-width="1.7" fill="none"/></g>
<g transform="translate(905.30,682.50)"><circle r="8.0" fill="none" stroke="#2b9a48" stroke-width="1.65"/><path d="M-6.95,-3.75 L3.75,6.95 M-3.75,-6.95 L6.95,3.75" stroke="#2b9a48" stroke-width="1.7" fill="none"/></g>
</svg>
</body></html>
